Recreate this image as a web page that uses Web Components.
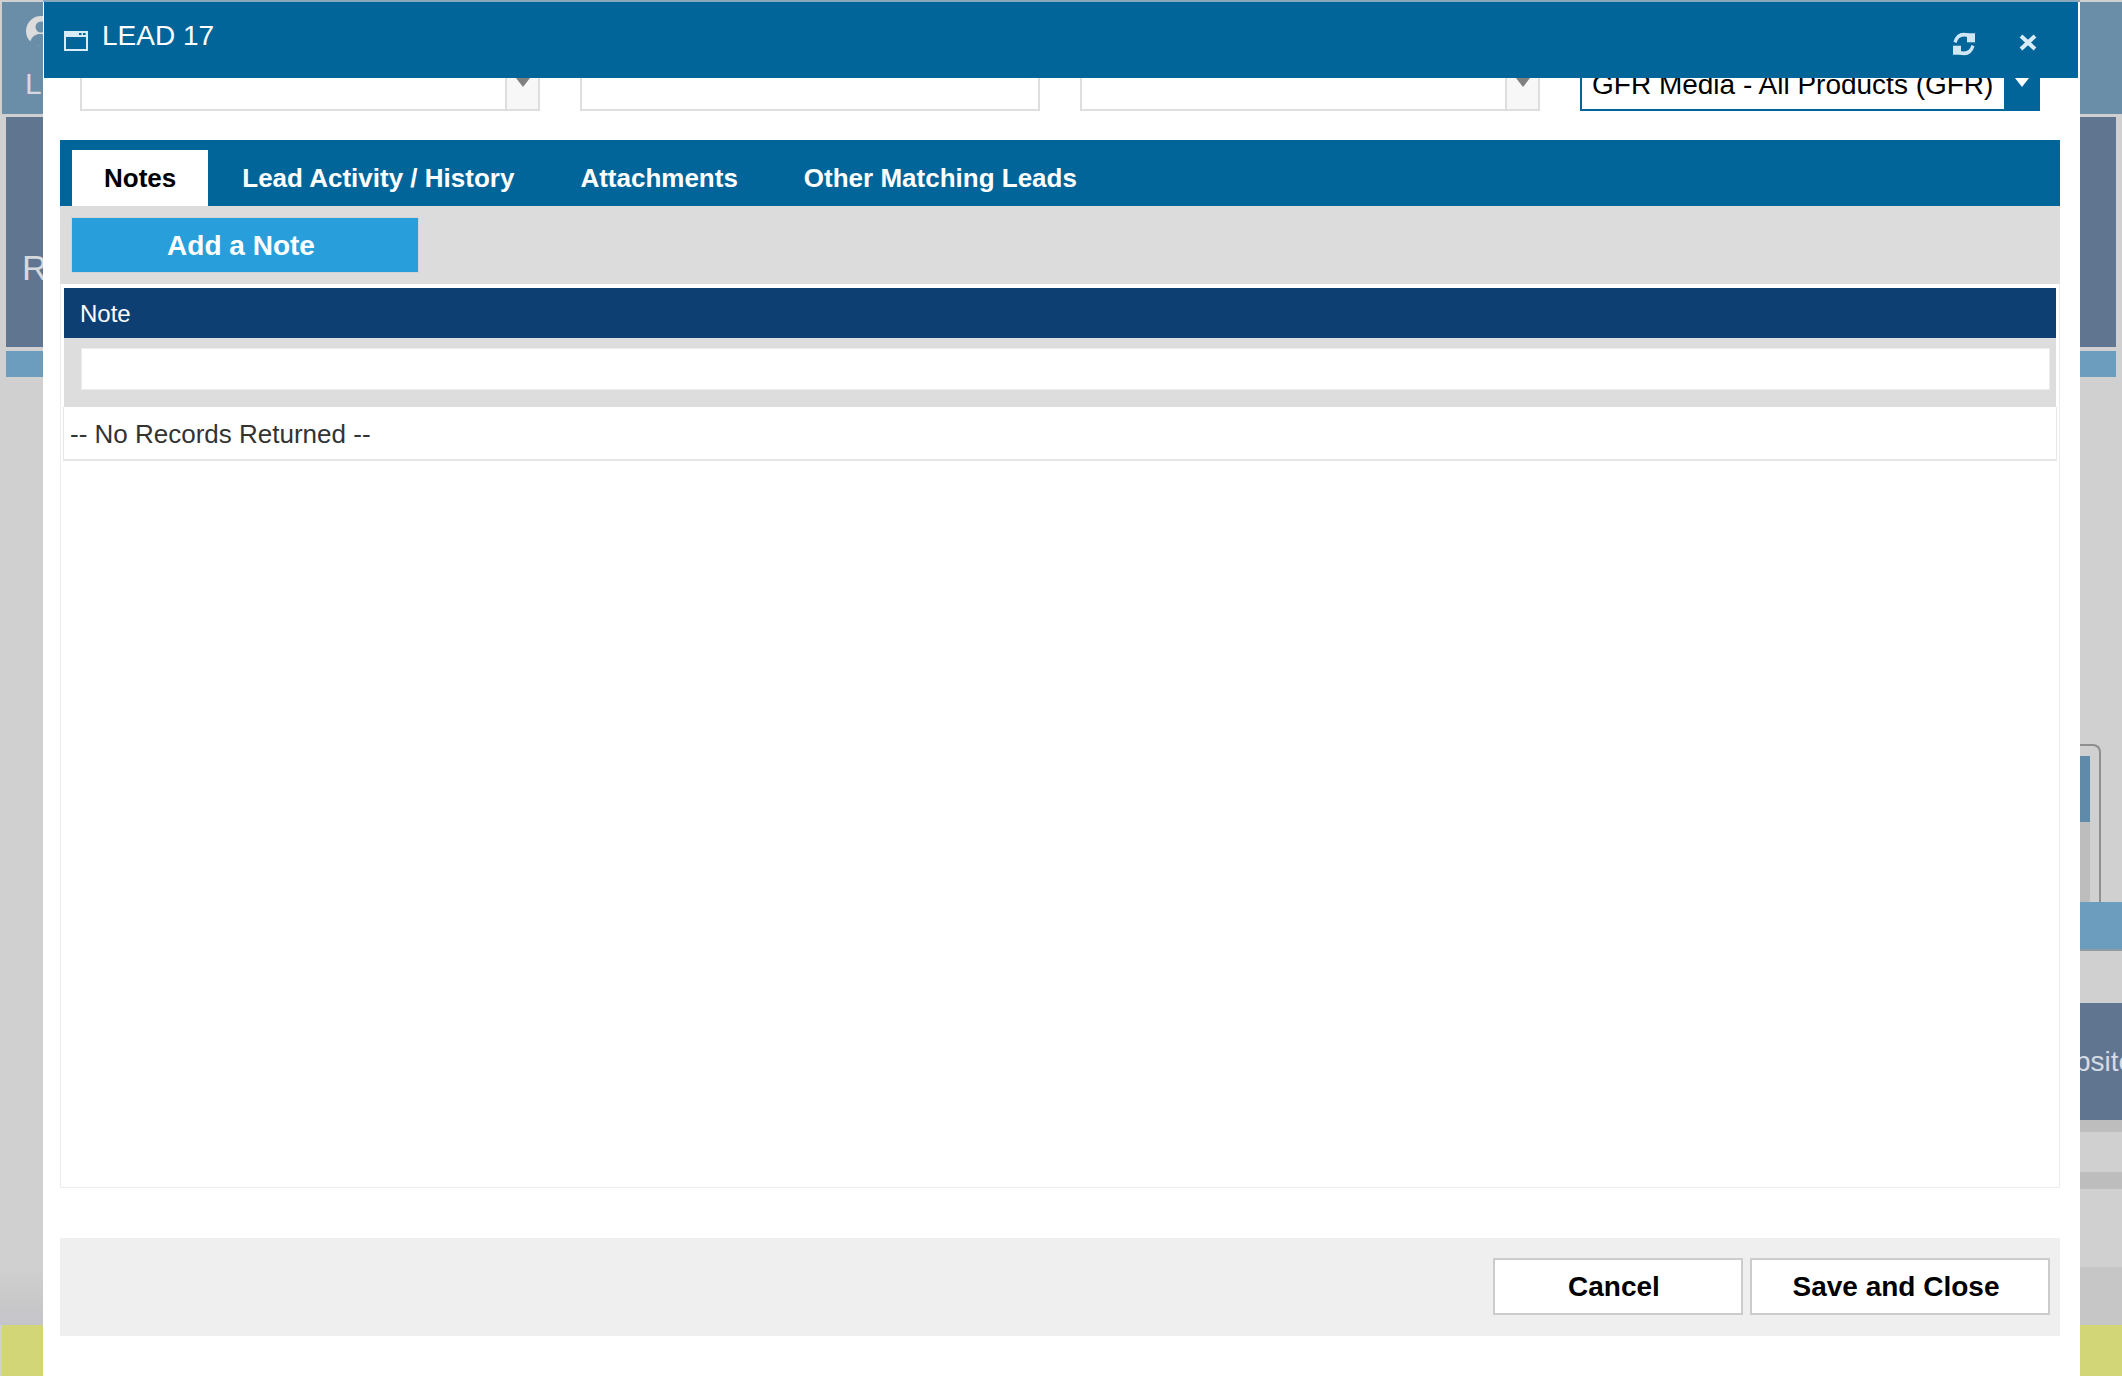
<!DOCTYPE html>
<html>
<head>
<meta charset="utf-8">
<title>LEAD 17</title>
<style>
html, body { margin: 0; padding: 0; background: #d0d0d0; }
body { font-family: "Liberation Sans", Arial, sans-serif; overflow: hidden; }
</style>
</head>
<body>
<app-page>
  <side-strip slot="left" side="left"></side-strip>
  <lead-modal slot="center" heading="LEAD 17"></lead-modal>
  <side-strip slot="right" side="right"></side-strip>
</app-page>

<script>
class AppPage extends HTMLElement {
    constructor() {
        super();
        this.attachShadow({ mode: 'open' });
        this.shadowRoot.innerHTML = `
        <style>
        :host { display: flex; width: 2122px; height: 1376px; overflow: hidden; }
        #left { display: block; flex: 0 0 43px; }
        #center { display: flex; flex: 0 0 2037px; }
        #right { display: block; flex: 0 0 42px; }
        ::slotted(*) { height: 100%; }
        </style>
        <div id="left"><slot name="left"></slot></div>
        <div id="center"><slot name="center"></slot></div>
        <div id="right"><slot name="right"></slot></div>
        `;
    }
}
customElements.define('app-page', AppPage);

// what is left visible of the page behind the dialog
class SideStrip extends HTMLElement {
    static get leftHtml() {
        return `
        <div class="block top" style="margin-left:2px">
            <svg class="user" viewBox="0 0 30 30" width="30" height="30" style="left:24px;top:14px">
                <circle cx="15" cy="15" r="15" fill="#dcdcdc"/>
                <circle cx="15" cy="11" r="5.500" fill="#6a8ea8"/>
                <path d="M4 26c2-6 6-8 10-8s9 2 11 8c-3 3-6 4-10 4s-8-1-11-4z" fill="#6a8ea8"/>
            </svg>
            <span class="t" style="left:23px;top:65px">L</span>
        </div>
        <div class="block dark" style="margin-left:6px">
            <span class="t" style="left:16px;top:132px;font-size:35px;line-height:38px">R</span>
        </div>
        <div class="block light" style="margin-left:6px"></div>
        <div class="block fill"></div>
        <div class="block low soft"></div>
        <div class="block yellow" style="margin-left:2px"></div>
        `;
    }

    static get rightHtml() {
        return `
        <div class="block top"></div>
        <div class="block dark" style="margin-right:6px"></div>
        <div class="block light" style="margin-right:6px;"></div>
        <div class="spacer" style="height:367px"></div>
        <div class="box"><div class="box-in"></div></div>
        <div class="block row"></div>
        <div class="spacer" style="height:52px"></div>
        <div class="block site"><span class="t" style="left:-5px;top:42px">bsite</span></div>
        <div class="block bar" style="height:12px"></div>
        <div class="spacer" style="height:40px"></div>
        <div class="block bar" style="height:17px"></div>
        <div class="spacer" style="height:78px"></div>
        <div class="block low"></div>
        <div class="block yellow"></div>
        `;
    }

    constructor() {
        super();
        this.attachShadow({ mode: 'open' });
        const side = this.getAttribute('side');
        this.shadowRoot.innerHTML = `
        <style>
        :host { display: flex; flex-direction: column; height: 100%; overflow: hidden; background: #d0d0d0; }
        .block { position: relative; overflow: hidden; flex: none; }
        .t { position: absolute; font-size: 30px; line-height: 34px; color: #d5d9de; white-space: nowrap; }
        .user { position: absolute; }
        .top { height: 112px; margin-top: 2px; background: #6a8ea8; margin-bottom: 3px; }
        .dark { height: 230px; background: #5f7590; margin-bottom: 4px; }
        .light { height: 26px; background: #6c9dbe; }
        .fill { flex: 1; }
        .low { height: 58px; background: #c6c6c6; }
        .low.soft { background: linear-gradient(#d0d0d0, #c9c9c9 55%, #c4c4cc); }
        .yellow { height: 51px; background: #d3d676; }
        .spacer { flex: none; }
        .box { flex: none; height: 158px; box-sizing: border-box; width: 21px; border: 2px solid #8f8f8f; border-left: 0; border-bottom: 0;
               border-top-right-radius: 8px; padding: 10px 9px 0 0; }
        .box-in { height: 100%; background: linear-gradient(#5f8aa8 0 66px, #bdbdbd 66px); }
        .row { height: 47px; background: #6c9dbe; border-bottom: 2px solid #8f9ca6; }
        .site { height: 117px; background: #5f7590; }
        .site .t { font-size: 28px; color: #d5dbe4; }
        .bar { background: #bdbdbd; }
        </style>
        ${side === 'left' ? this.constructor.leftHtml : this.constructor.rightHtml}
        `;
    }
}
customElements.define('side-strip', SideStrip);

class ModalTitlebar extends HTMLElement {
    constructor() {
        super();
        this.attachShadow({ mode: 'open' });
        this.shadowRoot.innerHTML = `
        <style>
        :host { display: flex; flex: none; align-items: flex-start; height: 76px; background: #01659a; color: #fff; position: relative; z-index: 2; }
        #icon { margin: 29px 0 0 20px; }
        #label { margin: 18px 0 0 14px; font-size: 28px; line-height: 32px; }
        #tools { margin-left: auto; display: flex; }
        #refresh { margin: 29px 0 0 0; }
        #close { margin: 32px 41px 0 43px; }
        </style>
        <svg id="icon" width="24" height="20" viewBox="0 0 24 20">
            <path d="M0 0h24v20H0z" fill="#d8ecf8"/>
            <path d="M2 6h20v12H2z" fill="#01659a"/>
            <path d="M15 2h2.500v2H15zM19 2h2.500v2H19z" fill="#01659a"/>
        </svg>
        <span id="label"><slot></slot></span>
        <div id="tools">
            <svg id="refresh" width="24" height="26" viewBox="0 0 24 23" preserveAspectRatio="none">
                <path d="M3 10C5 4 10 2 17 4" fill="none" stroke="#cfe6f5" stroke-width="3.200"/>
                <path d="M15 2h8v8h-8z" fill="#cfe6f5"/>
                <path d="M21 13c-2 6-7 8-14 6" fill="none" stroke="#cfe6f5" stroke-width="3.200"/>
                <path d="M1 13h8v8H1z" fill="#cfe6f5"/>
            </svg>
            <svg id="close" width="18" height="17" viewBox="0 0 18 17">
                <path d="M2 2l14 13M16 2L2 15" stroke="#d8ecf8" stroke-width="4" fill="none"/>
            </svg>
        </div>
        `;
    }
}
customElements.define('modal-titlebar', ModalTitlebar);

class FieldSelect extends HTMLElement {
    static get observedAttributes() {
        return ['kind'];
    }

    constructor() {
        super();
        this.attachShadow({ mode: 'open' });
        this.shadowRoot.innerHTML = `
        <style>
        :host { display: flex; box-sizing: border-box; width: 460px; height: 50px; background: #fff; border: 2px solid #dedede; border-top: 0; color: #000; font-size: 28px; }
        :host([kind="active"]) { border-color: #01659a; border-width: 0 0 2px 2px; }
        #value { flex: 1; padding-left: 10px; line-height: 32px; padding-top: 8px; white-space: nowrap; overflow: hidden; }
        #arrow { flex: none; width: 33px; background: #f7f7f7; border-left: 2px solid #dedede; display: flex; justify-content: center; padding-top: 17px; box-sizing: border-box; }
        :host([kind="active"]) #arrow { width: 36px; background: #01659a; border-left: 0; }
        :host([kind="text"]) #arrow { display: none; }
        #tri { width: 0; height: 0; border-left: 7px solid transparent; border-right: 7px solid transparent; border-top: 9px solid #808080; }
        :host([kind="active"]) #tri { border-top-color: #fff; }
        </style>
        <div id="value"><slot></slot></div>
        <div id="arrow"><div id="tri"></div></div>
        `;
    }
}
customElements.define('field-select', FieldSelect);

class TabItem extends HTMLElement {
    constructor() {
        super();
        this.attachShadow({ mode: 'open' });
        this.shadowRoot.innerHTML = `
        <style>
        :host { display: block; padding: 0 32px; height: 56px; line-height: 56px; font-size: 26px; font-weight: bold; color: #fff; margin-right: 2px; }
        :host([active]) { background: #fff; color: #000; }
        </style>
        <slot></slot>
        `;
    }
}
customElements.define('tab-item', TabItem);

class ActionButton extends HTMLElement {
    constructor() {
        super();
        this.attachShadow({ mode: 'open' });
        this.shadowRoot.innerHTML = `
        <style>
        :host { display: flex; box-sizing: border-box; justify-content: center; align-items: center; padding: 1px 8px 0 0; font-size: 28px; font-weight: bold; background: #fff; color: #000; border: 2px solid #cccccc; }
        :host([primary]) { background: #289fdb; color: #fff; border: 0; outline: 1px solid #cfd4d8; }
        </style>
        <slot></slot>
        `;
    }
}
customElements.define('action-button', ActionButton);

class NotesGrid extends HTMLElement {
    constructor() {
        super();
        this.attachShadow({ mode: 'open' });
        this.shadowRoot.innerHTML = `
        <style>
        :host { display: block; margin: 0 3px 0 3px; font-size: 24px; }
        #head { height: 50px; line-height: 52px; padding-left: 16px; background: #0d3f73; color: #fff; }
        #filter { background: #dcdddc; padding: 10px 6px 17px 17px; }
        #filter div { box-sizing: border-box; height: 42px; background: #fff; border: 1px solid #ececec; }
        #empty { box-sizing: border-box; height: 54px; line-height: 55px; padding-left: 6px; font-size: 26px; color: #333; background: #fff; border: 1px solid #e6e6e6; border-top: 0; border-bottom-width: 2px; margin: 0 -1px; }
        </style>
        <div id="head">Note</div>
        <div id="filter"><div></div></div>
        <div id="empty"><slot></slot></div>
        `;
    }
}
customElements.define('notes-grid', NotesGrid);

class LeadModal extends HTMLElement {
    static get localStyles() {
        return `
        <style>
        :host { display: flex; flex-direction: column; width: 2037px; height: 100%; box-sizing: border-box; padding: 0 2px 0 1px; border-top: 2px solid #8aa7bb; background: #fff; overflow: hidden; }
        #scroll { flex: 1; overflow: hidden; margin-right: -2px; margin-left: -1px; }
        #fields { display: flex; justify-content: space-between; margin: -17px 40px 0 37px; }
        #panel { box-sizing: border-box; height: 1048px; margin: 29px 20px 0 17px; border: 1px solid #ececec; border-top: 0; }
        #tabs { display: flex; height: 66px; box-sizing: border-box; padding: 10px 0 0 12px; background: #01659a; margin: 0 -1px; }
        #toolbar { height: 78px; box-sizing: border-box; padding: 12px 0 0 12px; background: #dcdcdc; margin: 0 -1px 4px; display: flex; }
        #toolbar action-button { width: 346px; height: 54px; }
        #footer { display: flex; justify-content: flex-end; gap: 7px; box-sizing: border-box; height: 98px; margin: 50px 20px 0 17px; padding: 20px 10px 0 0; background: #efefef; }
        #footer action-button { height: 57px; }
        </style>
        `;
    }

    static get html() {
        return `
        <modal-titlebar id="title"></modal-titlebar>
        <div id="scroll">
            <div id="fields">
                <field-select></field-select>
                <field-select kind="text"></field-select>
                <field-select></field-select>
                <field-select kind="active">GFR Media - All Products (GFR)</field-select>
            </div>
            <div id="panel">
                <div id="tabs">
                    <tab-item active>Notes</tab-item>
                    <tab-item>Lead Activity / History</tab-item>
                    <tab-item>Attachments</tab-item>
                    <tab-item>Other Matching Leads</tab-item>
                </div>
                <div id="toolbar"><action-button primary>Add a Note</action-button></div>
                <notes-grid>-- No Records Returned --</notes-grid>
            </div>
            <div id="footer">
                <action-button style="width:250px">Cancel</action-button>
                <action-button style="width:300px">Save and Close</action-button>
            </div>
        </div>
        `;
    }

    constructor() {
        super();
        const template = document.createElement('template');
        template.innerHTML = this.constructor.localStyles + this.constructor.html;
        this.attachShadow({ mode: 'open' });
        this.shadowRoot.appendChild(template.content.cloneNode(true));
        this.shadowRoot.querySelector('#title').textContent = this.getAttribute('heading');
    }
}
customElements.define('lead-modal', LeadModal);
</script>
</body>
</html>
